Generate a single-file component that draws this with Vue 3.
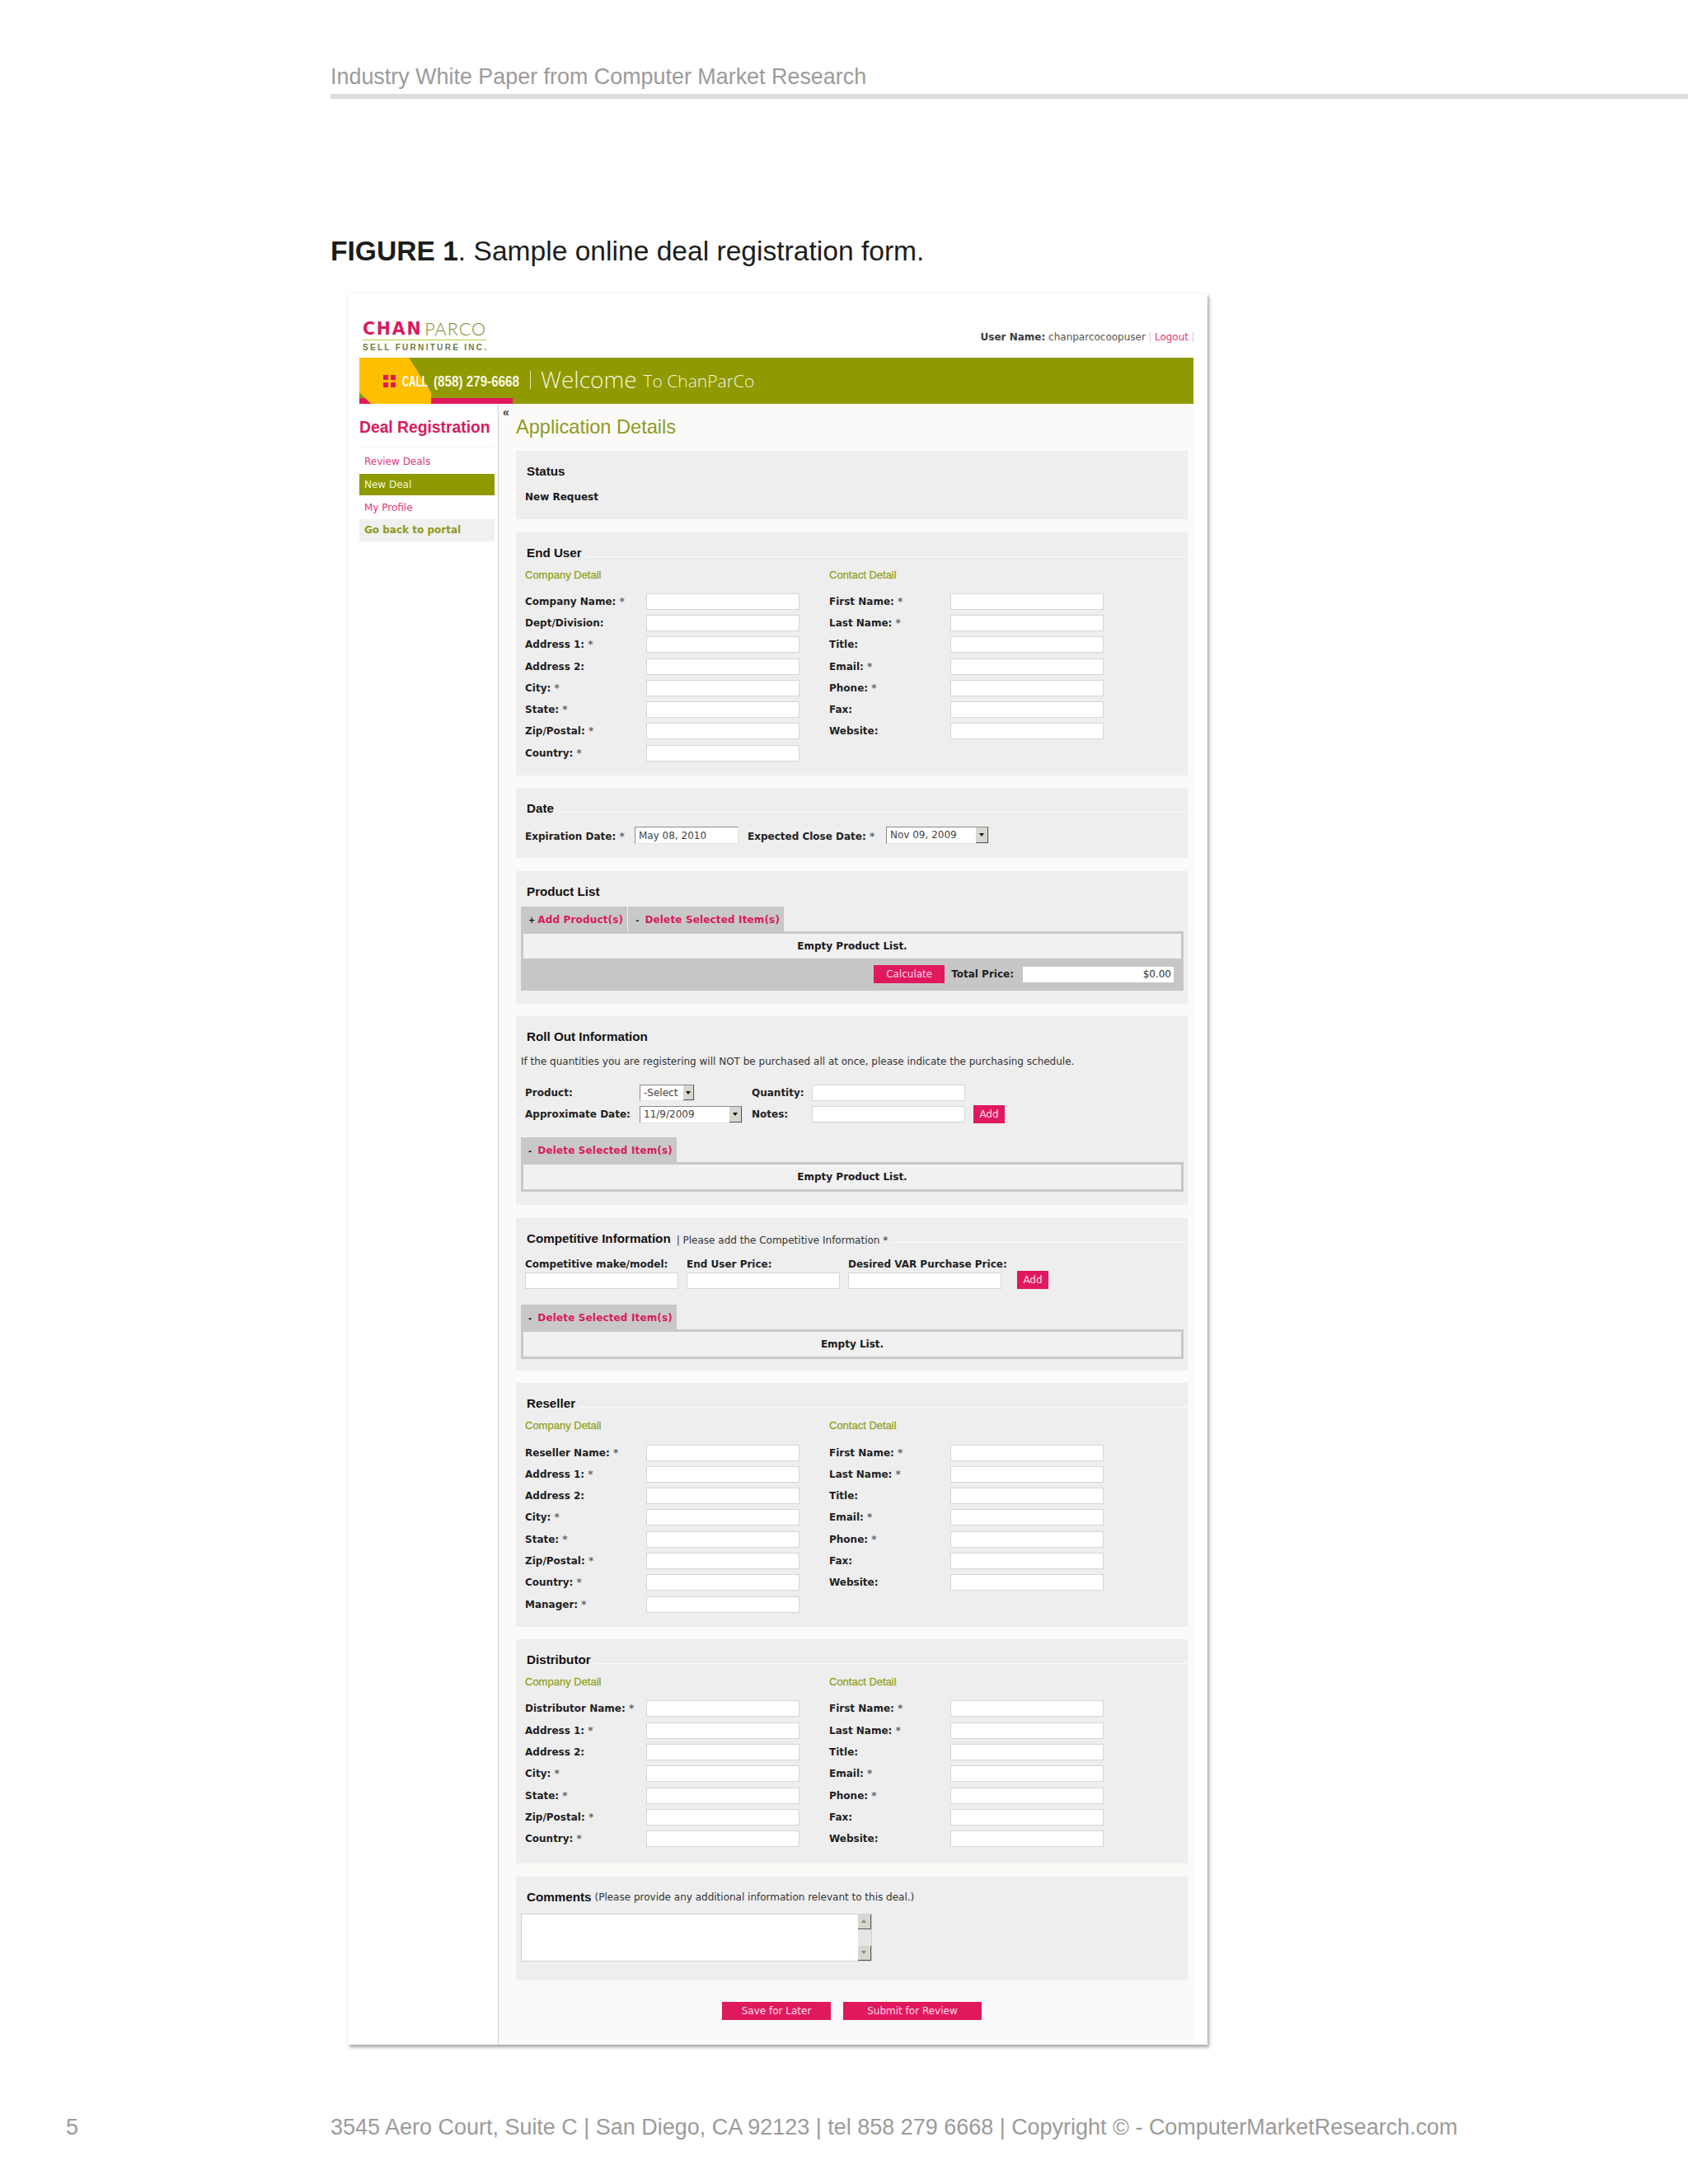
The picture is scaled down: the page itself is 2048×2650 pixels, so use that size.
<script setup>
const menu = [
  { label: 'Review Deals', cls: 'link' },
  { label: 'New Deal', cls: 'active' },
  { label: 'My Profile', cls: 'link' },
  { label: 'Go back to portal', cls: 'portal' }
]

const contact = ['First Name: *', 'Last Name: *', 'Title:', 'Email: *', 'Phone: *', 'Fax:', 'Website:']

const endUser = ['Company Name: *', 'Dept/Division:', 'Address 1: *', 'Address 2:', 'City: *', 'State: *', 'Zip/Postal: *', 'Country: *']
const reseller = ['Reseller Name: *', 'Address 1: *', 'Address 2:', 'City: *', 'State: *', 'Zip/Postal: *', 'Country: *', 'Manager: *']
const distributor = ['Distributor Name: *', 'Address 1: *', 'Address 2:', 'City: *', 'State: *', 'Zip/Postal: *', 'Country: *']

const partyTop = [
  { title: 'End User', company: endUser }
]
const partyBottom = [
  { title: 'Reseller', company: reseller },
  { title: 'Distributor', company: distributor, cls: 'short' }
]
const competitive = [
  { label: 'Competitive make/model:' },
  { label: 'End User Price:' },
  { label: 'Desired VAR Purchase Price:' }
]

const bare = (l) => l.replace(' *', '')
const required = (l) => l.endsWith('*')
</script>

<template>
  <div class="page">
    <header class="doc-head">Industry White Paper from Computer Market Research</header>
    <h1 class="caption"><b>FIGURE 1</b>. Sample online deal registration form.</h1>

    <div class="card">
      <div class="top">
        <div class="logo">
          <div class="logo-name"><span class="chan">CHAN</span><span class="parco">PARCO</span></div>
          <div class="logo-sub">SELL FURNITURE INC.</div>
        </div>
        <div class="user">
          <b>User Name:</b> chanparcocoopuser<i></i><a>Logout</a><i></i>
        </div>
      </div>

      <div class="banner">
        <svg class="banner-art" width="186" height="56" viewBox="0 0 186 56">
          <polygon points="0,0 60,0 87,42 87,56 14,56 0,42" fill="#fdbf00" />
          <polygon points="0,49 7,49 14,56 0,56" fill="#e0195f" />
          <rect x="87" y="49" width="99" height="7" fill="#e0195f" />
        </svg>
        <span class="dots"><i></i><i></i><i></i><i></i></span>
        <span class="call"><span>CALL</span></span>
        <span class="phone"><span>(858) 279-6668</span></span>
        <span class="bar"></span>
        <span class="welcome">Welcome</span>
        <span class="to">To ChanParCo</span>
      </div>

      <div class="body">
        <aside class="side">
          <h2>Deal Registration</h2>
          <ul>
            <li v-for="m in menu" :key="m.label" :class="m.cls">{{ m.label }}</li>
          </ul>
        </aside>

        <main class="main">
          <span class="collapse">«</span>
          <h2 class="app-title">Application Details</h2>

          <section class="sec status">
            <h3 class="title plain"><span>Status</span></h3>
            <p class="req">New Request</p>
          </section>

          <section v-for="p in partyTop" :key="p.title" class="sec party">
            <h3 class="title"><span>{{ p.title }}</span></h3>
            <div class="detail">
              <div>
                <div class="sub">Company Detail</div>
                <div v-for="l in p.company" :key="l" class="row">
                  <label>{{ bare(l) }}<em v-if="required(l)"> *</em></label><input class="field" type="text" />
                </div>
              </div>
              <div>
                <div class="sub">Contact Detail</div>
                <div v-for="l in contact" :key="l" class="row">
                  <label>{{ bare(l) }}<em v-if="required(l)"> *</em></label><input class="field" type="text" />
                </div>
              </div>
            </div>
          </section>

          <section class="sec dates">
            <h3 class="title"><span>Date</span></h3>
            <div class="date-row">
              <label>Expiration Date:<em> *</em></label>
              <input class="field date" type="text" value="May 08, 2010" />
              <label class="second">Expected Close Date:<em> *</em></label>
              <div class="combo w125"><span>Nov 09, 2009</span><b class="drop"></b></div>
            </div>
          </section>

          <section class="sec products">
            <h3 class="title plain"><span>Product List</span></h3>
            <div class="tabs">
              <div class="tab"><b class="sign">+</b> Add Product(s)</div>
              <div class="tab"><b class="sign">-</b> Delete Selected Item(s)</div>
            </div>
            <div class="list-box noborder-bottom">Empty Product List.</div>
            <div class="total">
              <button class="btn calc">Calculate</button>
              <label>Total Price:</label>
              <input class="price" type="text" value="$0.00" />
            </div>
          </section>

          <section class="sec rollout">
            <h3 class="title plain"><span>Roll Out Information</span></h3>
            <p class="hint">If the quantities you are registering will NOT be purchased all at once, please indicate the purchasing schedule.</p>
            <div class="roll-grid">
              <label>Product:</label>
              <div class="combo w67"><span>-Select</span><b class="drop small"></b></div>
              <label class="q">Quantity:</label>
              <input class="field" type="text" />
              <span></span>
              <label>Approximate Date:</label>
              <div class="combo w125"><span>11/9/2009</span><b class="drop"></b></div>
              <label class="q">Notes:</label>
              <input class="field" type="text" />
              <button class="btn add">Add</button>
            </div>
            <div class="tabs"><div class="tab"><b class="sign">-</b> Delete Selected Item(s)</div></div>
            <div class="list-box">Empty Product List.</div>
          </section>

          <section class="sec compet">
            <h3 class="title"><span>Competitive Information</span><small>| Please add the Competitive Information *</small></h3>
            <div class="comp-row">
              <div v-for="c in competitive" :key="c.label" class="comp-cell">
                <label>{{ c.label }}</label>
                <input class="field" type="text" />
              </div>
              <button class="btn add">Add</button>
            </div>
            <div class="tabs"><div class="tab"><b class="sign">-</b> Delete Selected Item(s)</div></div>
            <div class="list-box">Empty List.</div>
          </section>

          <section v-for="p in partyBottom" :key="p.title" class="sec party" :class="p.cls">
            <h3 class="title"><span>{{ p.title }}</span></h3>
            <div class="detail">
              <div>
                <div class="sub">Company Detail</div>
                <div v-for="l in p.company" :key="l" class="row">
                  <label>{{ bare(l) }}<em v-if="required(l)"> *</em></label><input class="field" type="text" />
                </div>
              </div>
              <div>
                <div class="sub">Contact Detail</div>
                <div v-for="l in contact" :key="l" class="row">
                  <label>{{ bare(l) }}<em v-if="required(l)"> *</em></label><input class="field" type="text" />
                </div>
              </div>
            </div>
          </section>

          <section class="sec comments">
            <h3 class="title plain"><span>Comments</span><small>(Please provide any additional information relevant to this deal.)</small></h3>
            <div class="textarea">
              <div class="scroll">
                <b class="sb up"></b>
                <b class="sb down"></b>
              </div>
            </div>
          </section>

          <div class="actions">
            <button class="btn save">Save for Later</button>
            <button class="btn submit">Submit for Review</button>
          </div>
        </main>
      </div>
    </div>

    <footer class="doc-foot">
      <span class="num">5</span>
      <span>3545 Aero Court, Suite C | San Diego, CA 92123 | tel 858 279 6668 | Copyright © - ComputerMarketResearch.com</span>
    </footer>
  </div>
</template>

<style scoped>
.page {
  width: 2048px;
  height: 2650px;
  background: #fff;
  font-family: "Liberation Sans", Arial, sans-serif;
  overflow: hidden;
}

.doc-head {
  margin-left: 401px;
  padding-top: 74px;
  height: 40px;
  line-height: 39px;
  font-size: 26.9px;
  color: #9b9b9b;
  border-bottom: 6px solid #dcdcdc;
}
.caption {
  margin: 165px 0 0 401px;
  height: 40px;
  line-height: 40px;
  font-size: 33.6px;
  font-weight: 400;
  color: #1c1c1c;
}

.card {
  margin: 31px 0 0 422px;
  width: 1043px;
  height: 2125px;
  background: #fff;
  box-sizing: border-box;
  padding-left: 14px;
  padding-right: 17px;
  box-shadow: 2px 3px 4px rgba(0, 0, 0, 0.35), 0 0 3px rgba(0, 0, 0, 0.06);
}
.top {
  height: 78px;
  display: flex;
  justify-content: space-between;
}
.logo { margin: 31px 0 0 4px; width: 150px; }
.logo-name {
  display: flex;
  justify-content: space-between;
  height: 24px;
  line-height: 24px;
  border-bottom: 1px solid #b9cc3c;
  padding-bottom: 1px;
}
.chan {
  font-family: "DejaVu Sans", sans-serif;
  font-size: 20.5px;
  color: #d91a5e;
  font-weight: 700;
  letter-spacing: 1.8px;
}
.parco {
  font-family: Lato, sans-serif;
  font-weight: 300;
  color: #7e8c35;
  letter-spacing: 1px;
  font-size: 21.5px;
}
.logo-sub {
  margin-top: 3px;
  font-size: 10px;
  line-height: 11px;
  font-weight: 700;
  letter-spacing: 2.3px;
  color: #6f7a4a;
  white-space: nowrap;
}
.user {
  margin-top: 46px;
  font-family: "DejaVu Sans", sans-serif;
  font-size: 12px;
  line-height: 14px;
  height: 14px;
  color: #555;
  white-space: nowrap;
}
.user b { color: #3c3c3c; }
.user a { color: #e0377e; }
.user i {
  display: inline-block;
  width: 1px;
  height: 12px;
  background: #ccc;
  margin: 0 5px;
  vertical-align: -2px;
}
.user i:last-child { margin-right: 0; }

.banner {
  position: relative;
  height: 56px;
  background: #8f9900;
  display: flex;
  align-items: center;
  padding-left: 29px;
  color: #fff;
  white-space: nowrap;
}
.banner-art { position: absolute; left: 0; top: 0; }
.dots {
  position: relative;
  display: grid;
  grid-template-columns: 6px 6px;
  gap: 3px;
  margin-top: 1px;
}
.dots i { width: 6px; height: 6px; background: #e0195f; }
.call, .phone {
  position: relative;
  font-weight: 700;
  font-size: 18px;
  margin-top: 2px;
}
.call span, .phone span {
  display: inline-block;
  transform-origin: left center;
}
.call { margin-left: 8px; width: 30px; }
.call span { transform: scaleX(0.64); }
.phone { margin-left: 8px; width: 104px; color: #f7f7e4; }
.phone span { transform: scaleX(0.845); }
.bar {
  position: relative;
  width: 1px;
  height: 22px;
  background: #e6e8b8;
  margin: -3px 12px 0 13px;
}
.welcome {
  font-size: 28px;
  margin-top: -4px;
  color: #f3f4dc;
  font-family: "Open Sans", sans-serif;
  font-weight: 300;
}
.to {
  font-size: 21px;
  margin-left: 8px;
  margin-top: -1px;
  color: #f3f4dc;
  font-family: "Open Sans", sans-serif;
  font-weight: 300;
}

.body {
  display: flex;
  height: 1991px;
}
.side {
  width: 168px;
  flex: none;
  border-right: 1px solid #d2d2d2;
}
.side h2 {
  margin: 19px 0 0;
  height: 20px;
  line-height: 20px;
  font-size: 19.3px;
  font-weight: 700;
  color: #d91a5e;
  white-space: nowrap;
}
.side ul {
  list-style: none;
  margin: 14px 4px 0 0;
  padding: 3px 0 0;
  border-top: 1px solid #f4f4f2;
  font-family: "DejaVu Sans", sans-serif;
  font-size: 12px;
}
.side li {
  height: 26px;
  line-height: 26px;
  padding-left: 6px;
  margin-bottom: 2px;
  color: #e0377e;
}
.side li.active { background: #8f9900; color: #f4f5dc; }
.side li.portal { background: #f0f0ee; color: #8f9a1e; font-weight: 700; height: 27px; line-height: 27px; margin-top: -1px; }

.main {
  position: relative;
  flex: 1;
  background: #fbfaf8;
  padding: 0 7px 0 21px;
}
.collapse {
  position: absolute;
  left: 5px;
  top: 1px;
  font-size: 14px;
  font-weight: 700;
  line-height: 18px;
  color: #444;
}
.app-title {
  margin: 0;
  padding-top: 14px;
  box-sizing: border-box;
  height: 57px;
  line-height: 28px;
  font-size: 23.6px;
  font-weight: 400;
  color: #8f9a1e;
  white-space: nowrap;
}

.sec {
  background: #eeeeef;
  margin-bottom: 15.5px;
  font-family: "DejaVu Sans", sans-serif;
  color: #1a1a1a;
}
.title {
  display: flex;
  align-items: flex-start;
  margin: 0;
  padding: 15px 0 0 13px;
  height: 34px;
  box-sizing: border-box;
  font-family: "Liberation Sans", sans-serif;
  font-size: 15.2px;
  line-height: 20px;
  font-weight: 700;
  color: #111;
  white-space: nowrap;
}
.title::after {
  content: "";
  flex: 1;
  height: 1px;
  margin-top: 14px;
  margin-left: 4px;
  background: #fbfbfb;
}
.title.plain::after { display: none; }
.title small {
  font-family: "DejaVu Sans", sans-serif;
  font-size: 12px;
  font-weight: 400;
  color: #333;
  margin-left: 7px;
}
.status { height: 83px; }
.req {
  margin: 15px 0 0 11px;
  font-size: 12px;
  line-height: 14px;
  font-weight: 700;
}

label {
  font-family: "DejaVu Sans", sans-serif;
  font-size: 12px;
  font-weight: 700;
  color: #1f1f1f;
  white-space: nowrap;
}
label em { font-style: normal; color: #666; }
.field {
  display: block;
  box-sizing: border-box;
  width: 186px;
  height: 20px;
  margin: 0;
  padding: 0 4px;
  border: 1px solid #d6d6d6;
  background: #fff;
  font-family: "DejaVu Sans", sans-serif;
  font-size: 12px;
  color: #444;
  outline: none;
}

.detail {
  display: grid;
  grid-template-columns: 333px 333px;
  column-gap: 36px;
  margin-left: 11px;
  padding-bottom: 14px;
}
.short .detail { padding-bottom: 17px; }
.sub {
  margin-top: 10px;
  margin-bottom: 11px;
  height: 16px;
  line-height: 16px;
  font-family: "Liberation Sans", sans-serif;
  font-size: 13px;
  font-weight: 400;
  color: #93a524;
  -webkit-text-stroke: 0.3px #93a524;
}
.row {
  display: grid;
  grid-template-columns: 147px 186px;
  align-items: center;
  height: 26.3px;
}

.date-row {
  display: flex;
  align-items: center;
  margin: 13px 0 0 11px;
  padding-bottom: 17px;
}
.date-row label { width: 133px; padding-top: 2px; }
.date-row label.second { width: 168px; margin-left: 11px; }
.field.date { width: 126px; height: 21px; border-color: #8a8a8a #e4e4e4 #e4e4e4 #8a8a8a; padding-left: 4px; }

.combo {
  position: relative;
  box-sizing: border-box;
  height: 20px;
  border: 1px solid #8a8a8a;
  border-right-color: #e4e4e4;
  border-bottom-color: #e4e4e4;
  background: #fff;
  font-size: 12px;
  line-height: 18px;
  padding-left: 4px;
  color: #444;
  white-space: nowrap;
}
.w125 { width: 125px; height: 21px; }
.w67 { width: 67px; }
.drop {
  position: absolute;
  right: 0;
  top: 0;
  bottom: 0;
  width: 15px;
  background: #d8d6d0;
  border-right: 1px solid #555;
  border-bottom: 1px solid #555;
  box-sizing: border-box;
}
.drop::after {
  content: "";
  position: absolute;
  left: 4px;
  top: 7px;
  border-left: 3px solid transparent;
  border-right: 3px solid transparent;
  border-top: 4px solid #111;
}
.drop.small { width: 13px; }
.drop.small::after { left: 3px; top: 7px; }

.tabs { display: flex; gap: 1px; margin-left: 6px; height: 30px; }
.products .tabs { margin-top: 9px; }
.tab {
  height: 32px;
  line-height: 32px;
  padding: 0 5px 0 9px;
  background: #c8c8c8;
  font-size: 12px;
  font-weight: 700;
  letter-spacing: 0.15px;
  color: #d91a5e;
  white-space: nowrap;
  position: relative;
}
.sign { display: inline-block; width: 7px; font-size: 10px; color: #111; }
.list-box {
  position: relative;
  box-sizing: border-box;
  margin: 0 5px 0 6px;
  height: 36px;
  line-height: 30px;
  text-align: center;
  border: 3px solid #c8c8c8;
  background: #f1f1f1;
  font-size: 12px;
  font-weight: 700;
  color: #1a1a1a;
}
.noborder-bottom { border-bottom: 0; height: 33px; }
.total {
  margin: 0 5px 0 6px;
  height: 39px;
  background: #c6c6c6;
  display: flex;
  align-items: center;
  justify-content: flex-end;
  padding-right: 12px;
}
.products { padding-bottom: 16px; }
.price {
  box-sizing: border-box;
  width: 183px;
  height: 19px;
  margin-left: 11px;
  border: 0;
  padding: 0 3px;
  text-align: right;
  background: #fff;
  font-family: "DejaVu Sans", sans-serif;
  font-size: 12px;
  color: #333;
  outline: none;
}
.total label { margin-left: 8px; }
.btn {
  border: 0;
  padding: 0;
  background: #e0195f;
  color: #ffdbe8;
  font-family: "DejaVu Sans", sans-serif;
  font-size: 12px;
  line-height: 22px;
  height: 22px;
}
.calc { width: 86px; }
.add { width: 38px; }
.hint {
  margin: 14px 0 0 6px;
  font-size: 12px;
  line-height: 14px;
  color: #333;
  white-space: nowrap;
}
.roll-grid {
  display: grid;
  grid-template-columns: 139px 136px 73px 196px 38px;
  grid-template-rows: 26px 26px;
  align-items: center;
  justify-items: start;
  margin: 18px 0 15px 11px;
}
.rollout { padding-bottom: 16px; }
.compet { padding-bottom: 14px; }
.compet .title small { margin-top: 2px; }
.comp-row {
  display: flex;
  align-items: flex-end;
  gap: 10px;
  margin: 14px 0 19px 11px;
}
.comp-cell { width: 186px; }
.comp-cell label { display: block; line-height: 16px; height: 16px; margin-bottom: 2px; }
.comp-row .add { margin-left: 9px; }

.comments { height: 126px; margin-bottom: 0; }
.comments .title small { margin-left: 4px; }
.textarea {
  position: relative;
  box-sizing: border-box;
  margin-left: 6px;
  margin-top: 11px;
  width: 426px;
  height: 58px;
  border: 1px solid #d0d0d0;
  background: #fff;
}
.scroll {
  position: absolute;
  right: 0;
  top: 0;
  bottom: 0;
  width: 16px;
  background: #e6e6e2;
}
.sb {
  position: absolute;
  left: 0;
  width: 16px;
  height: 18px;
  background: #d8d6d0;
  border-right: 1px solid #555;
  border-bottom: 1px solid #555;
  box-sizing: border-box;
}
.sb.up { top: 0; }
.sb.down { bottom: 0; }
.sb::after {
  content: "";
  position: absolute;
  left: 4px;
  top: 6px;
  border-left: 3px solid transparent;
  border-right: 3px solid transparent;
}
.sb.up::after { border-bottom: 4px solid #888; }
.sb.down::after { border-top: 4px solid #888; }

.actions {
  display: flex;
  justify-content: center;
  gap: 15px;
  margin-top: 26px;
}
.save { width: 132px; }
.submit { width: 168px; }

.doc-foot {
  position: relative;
  margin-top: 83px;
  height: 34px;
  line-height: 34px;
  padding-left: 401px;
  font-size: 26.97px;
  color: #9b9b9b;
  white-space: nowrap;
}
.num { position: absolute; left: 80px; top: 0; }
</style>
